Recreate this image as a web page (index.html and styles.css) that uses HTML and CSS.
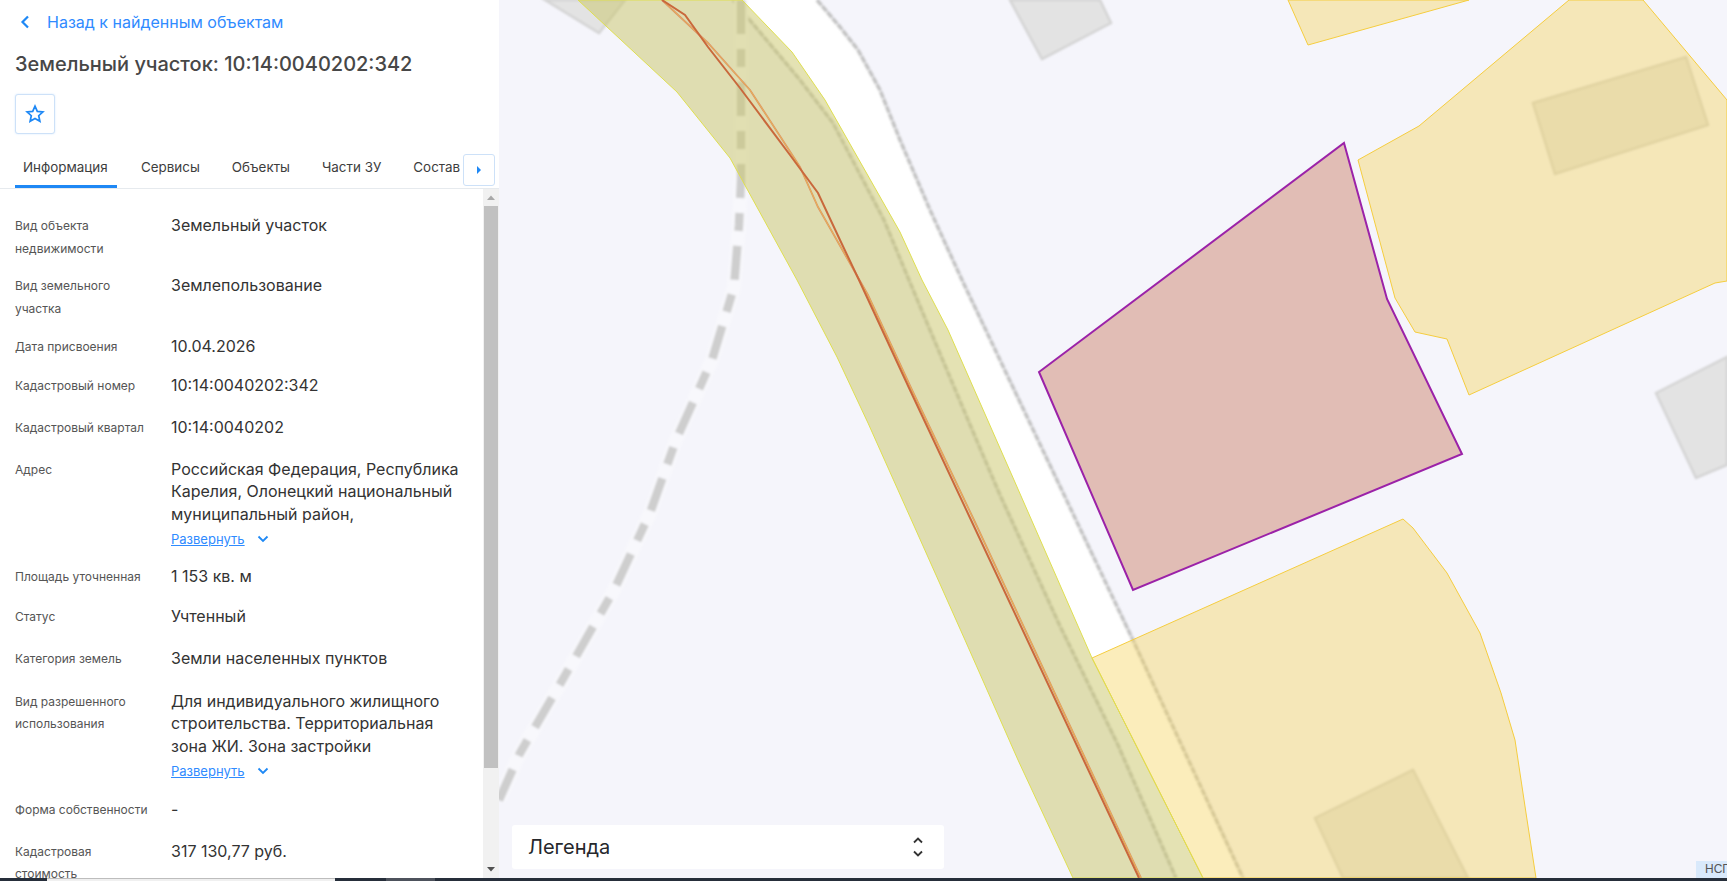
FILE: index.html
```html
<!DOCTYPE html>
<html lang="ru">
<head>
<meta charset="utf-8">
<title>Земельный участок</title>
<link rel="stylesheet" href="styles.css">
</head>
<body>
<div class="page">
  <div class="main">
    <aside class="panel">
      <a class="back" href="#">
        <svg class="back-icon" viewBox="0 0 10 14" width="10" height="14"><path d="M8 1.5 2.5 7 8 12.5" fill="none" stroke="#1e88f5" stroke-width="2.2"/></svg>
        <span>Назад к найденным объектам</span>
      </a>
      <h1 class="title">Земельный участок: 10:14:0040202:342</h1>
      <button class="star-btn" type="button" aria-label="В избранное">
        <svg viewBox="0 0 20 20" width="20" height="20"><path d="M10 2.2 12.3 7.4 17.9 8 13.7 11.7 14.9 17.3 10 14.4 5.1 17.3 6.3 11.7 2.1 8 7.7 7.4Z" fill="none" stroke="#1e88f5" stroke-width="1.7" stroke-linejoin="miter"/></svg>
      </button>
      <nav class="tabs">
        <span class="tab active">Информация</span>
        <span class="tab">Сервисы</span>
        <span class="tab">Объекты</span>
        <span class="tab">Части ЗУ</span>
        <span class="tab">Состав</span>
        <button class="tab-next" type="button" aria-label="Далее">
          <svg viewBox="0 0 6 10" width="6" height="10"><path d="M1 1 5 5 1 9Z" fill="#1e88f5"/></svg>
        </button>
      </nav>
      <div class="scroll-area">
        <div class="info">
          <div class="row m15"><div class="label">Вид объекта недвижимости</div><div class="value">Земельный участок</div></div>
          <div class="row m16"><div class="label">Вид земельного участка</div><div class="value">Землепользование</div></div>
          <div class="row m16"><div class="label">Дата присвоения</div><div class="value">10.04.2026</div></div>
          <div class="row m20"><div class="label">Кадастровый номер</div><div class="value">10:14:0040202:342</div></div>
          <div class="row m19"><div class="label">Кадастровый квартал</div><div class="value">10:14:0040202</div></div>
          <div class="row m17"><div class="label">Адрес</div><div class="value">Российская Федерация, Республика Карелия, Олонецкий национальный муниципальный район,
            <div class="expand"><a href="#">Развернуть</a><svg viewBox="0 0 12 8" width="12" height="8"><path d="M1.5 1.5 6 6 10.5 1.5" fill="none" stroke="#1e88f5" stroke-width="1.8"/></svg></div></div></div>
          <div class="row m17"><div class="label">Площадь уточненная</div><div class="value">1 153 кв. м</div></div>
          <div class="row m20"><div class="label">Статус</div><div class="value">Учтенный</div></div>
          <div class="row m20"><div class="label">Категория земель</div><div class="value">Земли населенных пунктов</div></div>
          <div class="row m18"><div class="label">Вид разрешенного использования</div><div class="value">Для индивидуального жилищного строительства. Территориальная зона ЖИ. Зона застройки
            <div class="expand"><a href="#">Развернуть</a><svg viewBox="0 0 12 8" width="12" height="8"><path d="M1.5 1.5 6 6 10.5 1.5" fill="none" stroke="#1e88f5" stroke-width="1.8"/></svg></div></div></div>
          <div class="row m19"><div class="label">Форма собственности</div><div class="value">-</div></div>
          <div class="row"><div class="label">Кадастровая стоимость</div><div class="value">317 130,77 руб.</div></div>
        </div>
        <div class="scrollbar">
          <svg class="sb-arrow" viewBox="0 0 16 17" width="16" height="17"><path d="M4 11 8 6.5 12 11Z" fill="#a8a8a8"/></svg>
          <div class="sb-thumb"></div>
          <div class="sb-rest"></div>
          <svg class="sb-arrow" viewBox="0 0 16 17" width="16" height="17"><path d="M4 6 8 10.5 12 6Z" fill="#505050"/></svg>
        </div>
      </div>
    </aside>
    <section class="map">
      <svg class="map-svg" viewBox="499 0 1228 878" width="1228" height="878" aria-hidden="true">
        <defs>
          <filter id="soft" x="-5%" y="-5%" width="110%" height="110%"><feGaussianBlur stdDeviation="0.9"/></filter>
        </defs>
        <polygon class="road" points="733,0 800,80 833,123 884,220 909,280 930,330 971,427 1000,495 1060,626 1118,745 1176,878 1243,878 1132,638 962,280 930,210 900,140 880,90 858,50 840,27 817,0"/>
        <g filter="url(#soft)">
          <polyline class="road-edge" points="733,0 800,80 833,123 884,220 909,280 930,330 971,427 1000,495 1060,626 1118,745 1176,878"/>
          <polyline class="road-edge" points="817,0 840,27 858,50 880,90 900,140 930,210 962,280 1132,638 1243,878"/>
          <polyline class="path-halo" points="741,0 741,180 739,225 734,287 712,360 676,440 650,513 614,590 574,660 520,753 499,800"/>
          <polyline class="path-dash" points="741,0 741,180 739,225 734,287 712,360 676,440 650,513 614,590 574,660 520,753 499,800"/>
          <polygon class="bld" points="545,0 599,33 625,0"/>
          <polygon class="bld" points="1010,0 1100,0 1111,23 1042,59"/>
          <polygon class="bld" points="1656,393 1727,357 1727,465 1696,478"/>
          <polygon class="bld" points="1533,103 1686,57 1708,125 1555,174"/>
          <polygon class="bld" points="1315,818 1413,770 1468,878 1343,878"/>
        </g>
        <polygon class="plot" points="1288,0 1308,45 1469,0"/>
        <polygon class="plot" points="1358,160 1419,126 1569,0 1643,0 1727,100 1727,281 1715,283 1469,395 1447,339 1415,332 1395,298"/>
        <polygon class="plot" points="1092,658 1403,519 1413,528 1447,573 1480,633 1501,693 1515,740 1526,813 1536,878 1203,878"/>
        <polygon class="zone" points="578,0 677,92 730,158 797,280 837,357 868,423 915,528 965,640 1018,760 1073,878 1203,878 1092,658 1014,480 948,330 922,280 900,232 825,100 792,52 742,0"/>
        <polyline class="line-thin" points="662,0 708,43 750,90 778,133 800,167 818,207 868,295 912,390 974,520 1141,878"/>
        <polyline class="line-thin-core" points="662,0 708,43 750,90 778,133 800,167 818,207 868,295 912,390 974,520 1141,878"/>
        <polyline class="line-thick" points="662,0 685,15 708,47 740,88 790,155 818,193 840,240 859,280 910,390 971,520 1139,878"/>
        <polygon class="subject" points="1344,143 1387,299 1462,454 1133,590 1039,372"/>
      </svg>
      <div class="legend">
        <span>Легенда</span>
        <svg viewBox="0 0 12 24" width="12" height="24"><path d="M2 7.5 6 3.5 10 7.5M2 16.5 6 20.5 10 16.5" fill="none" stroke="#333" stroke-width="1.8"/></svg>
      </div>
      <div class="attribution">НСПД</div>
    </section>
  </div>
  <div class="bottom-strip">
    <div class="seg seg-dark-a"></div>
    <div class="seg seg-light"></div>
    <div class="seg seg-dark-b"></div>
    <div class="seg seg-mid"></div>
    <div class="seg seg-dark-c"></div>
  </div>
</div>
</body>
</html>
```
FILE: styles.css
```css
* { box-sizing: border-box; }
html, body { margin: 0; height: 100%; overflow: hidden; }
body { font-family: Inter, "Noto Sans", sans-serif; color: #333; background: #fff; }
.page { display: flex; flex-direction: column; width: 1727px; height: 881px; }
.main { display: flex; height: 878px; }

.panel { width: 499px; height: 878px; display: flex; flex-direction: column; background: #fff; flex: none; }
.back { display: flex; align-items: center; height: 22px; margin: 11px 0 0 20px; color: #2f8bff; font-size: 16px; text-decoration: none; gap: 17px; }
.back-icon { flex: none; }
.title { margin: 19px 0 0 15px; font-size: 20px; line-height: 24px; font-weight: 500; color: #474747; }
.star-btn { width: 40px; height: 40px; margin: 18px 0 0 15px; padding: 0; display: flex; align-items: center; justify-content: center; background: #fff; border: 1px solid #cde1f8; border-radius: 3px; box-shadow: 0 0 2px rgba(30,136,245,.2); }

.tabs { position: relative; display: flex; gap: 16px; height: 35px; margin-top: 20px; padding-left: 15px; border-bottom: 1px solid #e6eaee; flex: none; }
.tab { padding: 1px 8px 0; font-size: 13.4px; line-height: 24px; color: #3d3d3d; white-space: nowrap; height: 34px; }
.tab.active { border-bottom: 3px solid #1e88f5; min-width: 102px; }
.tab-next { position: absolute; left: 463px; top: 0; width: 32px; height: 32px; padding: 0; display: flex; align-items: center; justify-content: center; background: #fff; border: 1px solid #cde1f8; border-radius: 3px; }

.scroll-area { flex: 1; display: flex; min-height: 0; overflow: hidden; }
.info { flex: 1; padding: 26px 0 0 15px; min-width: 0; overflow: hidden; }
.row { display: flex; }
.m15 { margin-bottom: 15px; }
.m16 { margin-bottom: 16px; }
.m17 { margin-bottom: 17px; }
.m18 { margin-bottom: 18px; }
.m19 { margin-bottom: 19px; }
.m20 { margin-bottom: 20px; }
.label { width: 156px; padding-right: 20px; flex: none; font-size: 12px; line-height: 22.5px; color: #555; }
.value { width: 296px; font-size: 16px; line-height: 22.5px; margin-top: -1px; color: #333; }
.expand { display: flex; align-items: center; gap: 12px; margin-top: 4px; font-size: 13px; line-height: 20px; }
.expand a { color: #2f8bff; text-decoration: underline; }

.scrollbar { width: 16px; flex: none; display: flex; flex-direction: column; background: #f1f1f1; }
.sb-arrow { flex: none; display: block; }
.sb-thumb { height: 562px; margin: 0 1px; background: #c1c1c1; flex: none; }
.sb-rest { flex: 1; }

.map { position: relative; width: 1228px; height: 878px; overflow: hidden; background: #f5f5fb; flex: none; }
.map-svg { display: block; }
.road { fill: #fff; }
.road-edge { fill: none; stroke: #c2c2c2; stroke-width: 3.5; stroke-dasharray: 7 1; stroke-linejoin: round; }
.path-halo { fill: none; stroke: #f8f8fc; stroke-width: 14; }
.path-dash { fill: none; stroke: #cecece; stroke-width: 8.5; stroke-dasharray: 34 15 18 15; }
.bld { fill: #e3e3e3; stroke: #d4d4d4; stroke-width: 2.5; }
.plot { fill: rgba(245,210,84,.4); stroke: #f5cd3f; stroke-width: 1; }
.zone { fill: rgba(201,197,103,.5); stroke: #dfdf50; stroke-width: 1; }
.line-thin { fill: none; stroke: #d98c6e; stroke-width: 1.8; }
.line-thin-core { fill: none; stroke: #ecc24a; stroke-width: .8; }
.line-thick { fill: none; stroke: #c9683c; stroke-width: 2; }
.subject { fill: #e1bdb5; stroke: #9b22a8; stroke-width: 2; }

.legend { position: absolute; left: 13px; top: 825px; width: 432px; height: 44px; padding: 0 20px 0 16px; display: flex; align-items: center; justify-content: space-between; background: #fff; border-radius: 3px; font-size: 20px; color: #26282c; }
.attribution { position: absolute; right: 0; top: 861px; width: 31px; height: 17px; padding-left: 9px; background: #d9e9fb; color: #555; font-family: "Liberation Sans", sans-serif; font-size: 12px; line-height: 17px; white-space: nowrap; overflow: hidden; }

.bottom-strip { display: flex; height: 3px; }
.seg-dark-a { width: 47px; background: #262e3a; }
.seg-light { width: 288px; background: #f0f0f0; border-top: 1px solid #bdbdbd; }
.seg-dark-b { width: 51px; background: #262e3a; }
.seg-mid { width: 49px; background: #4d525c; }
.seg-dark-c { flex: 1; background: #262e3a; }
```
